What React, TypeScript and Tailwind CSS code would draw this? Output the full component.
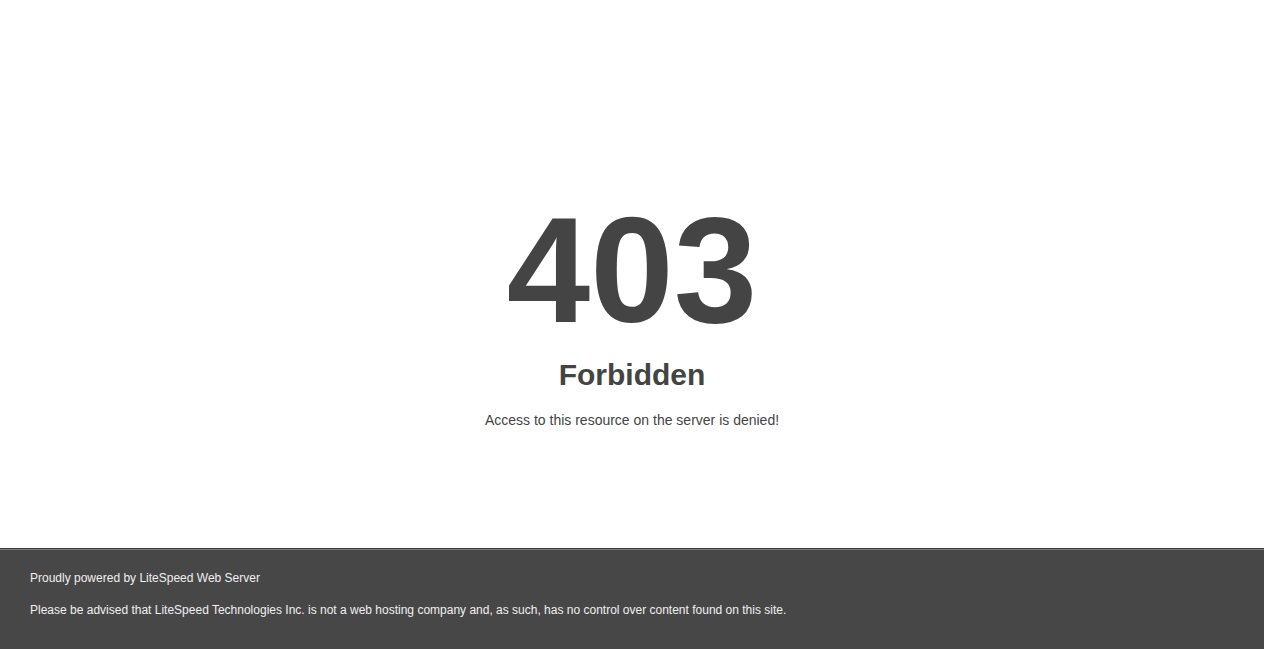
export default function App() {
  return (
    <div className="flex min-h-screen flex-col bg-white font-['Liberation_Sans',Arial,Helvetica,sans-serif] text-[#444]">
      {/* error message block */}
      <main className="flex-1 pt-[30vh] text-center">
        <h1 className="m-0 text-[150px] leading-[150px] font-bold">403</h1>
        <h2 className="mt-[13px] mb-5 text-[30px] leading-[34px] font-bold">Forbidden</h2>
        <p className="text-sm leading-4">Access to this resource on the server is denied!</p>
      </main>

      {/* server footer */}
      <footer className="h-[101px] border-t border-black/15 bg-[#474747] px-[30px] text-xs leading-[14px] text-[#f0f0f0] shadow-[inset_0_1px_0_rgba(255,255,255,0.3)]">
        <div className="h-[22px]" />
        <div>Proudly powered by LiteSpeed Web Server</div>
        <p className="my-[18px]">
          Please be advised that LiteSpeed Technologies Inc. is not a web hosting company and, as such, has no control
          over content found on this site.
        </p>
      </footer>
    </div>
  );
}
